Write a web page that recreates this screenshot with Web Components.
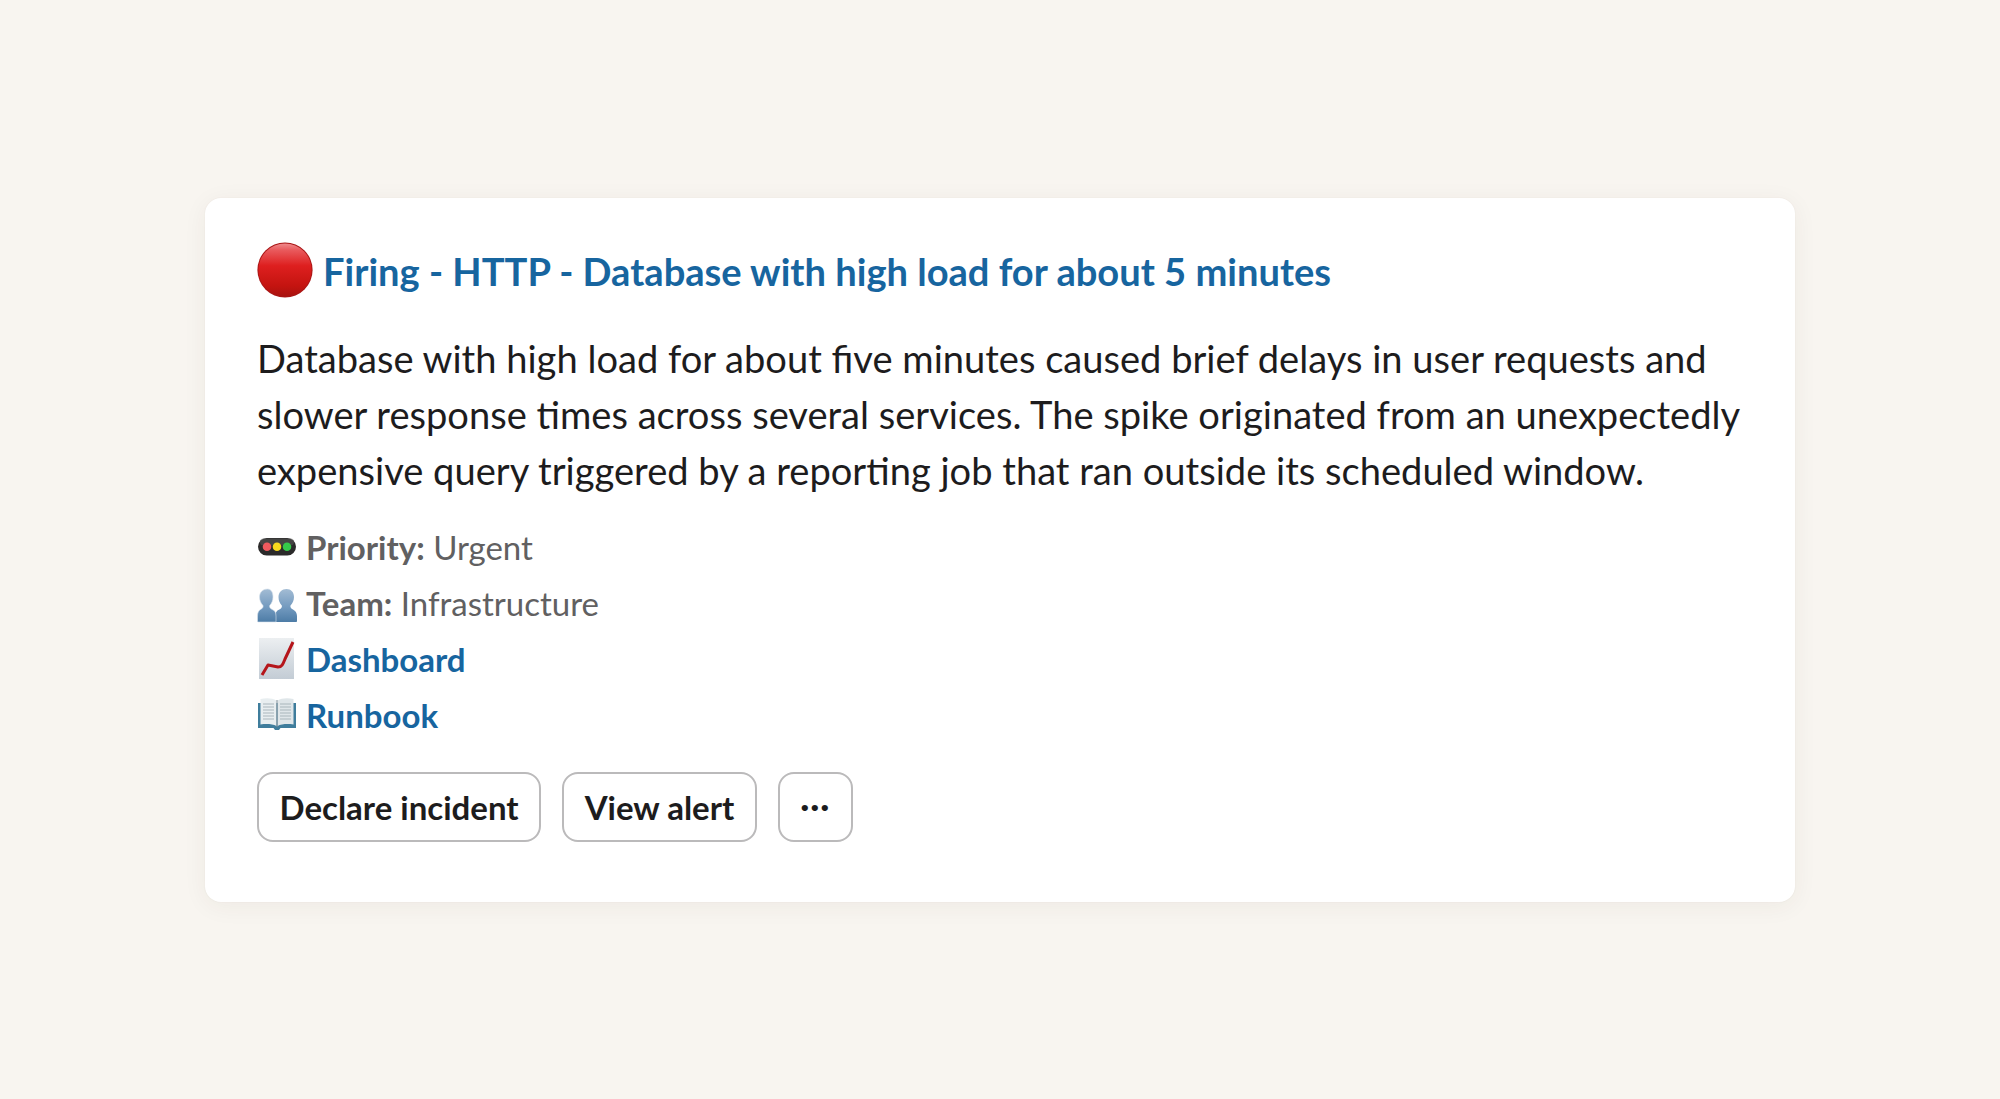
<!DOCTYPE html>
<html>
    <head>
        <title>Alert</title>
        <style>
            html, body { margin: 0; height: 100%; }
            body {
                display: flex;
                align-items: center;
                justify-content: center;
                background: #f8f5f0;
                font-family: Lato, "Liberation Sans", sans-serif;
            }
        </style>

        <!-- ---------------------------------------------------------------------------- ICON -->
        <script>
            const ICONS = {
                circle: `<svg viewBox="0 0 56 56" width="56" height="56">
                    <defs>
                        <linearGradient id="r" x1="0" y1="0" x2="0" y2="1">
                            <stop offset="0" stop-color="#ef8a8c"/>
                            <stop offset=".12" stop-color="#e95b5e"/>
                            <stop offset=".42" stop-color="#de1f1f"/>
                            <stop offset=".8" stop-color="#c41410"/>
                            <stop offset="1" stop-color="#a8120f"/>
                        </linearGradient>
                    </defs>
                    <circle cx="28" cy="28" r="27.6" fill="#a81414"/>
                    <circle cx="28" cy="28" r="26.6" fill="url(#r)"/>
                </svg>`,
                light: `<svg viewBox="0 0 40 40" width="40" height="40">
                    <rect x="1" y="11" width="38" height="17.500" rx="8.750" fill="#2b2a2a"/>
                    <rect x="3" y="11.500" width="34" height="7" rx="3.500" fill="#5a5958" opacity=".55"/>
                    <circle cx="10" cy="19.800" r="4.300" fill="#ef5a5e"/>
                    <circle cx="20" cy="19.800" r="4.300" fill="#f6d81e"/>
                    <circle cx="30" cy="19.800" r="4.300" fill="#35c94a"/>
                </svg>`,
                people: `<svg viewBox="0 0 40 40" width="40" height="40">
                    <defs>
                        <linearGradient id="p" x1="0" y1="0" x2="0" y2="1">
                            <stop offset="0" stop-color="#a3bcd4"/>
                            <stop offset=".6" stop-color="#6f97bd"/>
                            <stop offset="1" stop-color="#4d7ca6"/>
                        </linearGradient>
                    </defs>
                    <path fill="url(#p)" d="M29.500 6c-4.500 0-8 3-8 8 0 3.500 1.300 6.500 3.300 8.500.5 1.500-.5 3-2.500 4-3 1.300-3.800 3.300-3.800 6.500v6h20.500c.6 0 1-.4 1-1v-5c0-3-1.500-5.200-4-6.500-2-1-3-2.500-2.500-4 2-2 3.500-5 3.500-8.500 0-5-3-8-7.500-8z"/>
                    <path fill="url(#p)" stroke="#d9e3ec" stroke-width=".6" d="M10.500 6C6 6 2.500 9 2.500 14c0 3.500 1.500 6.500 3.500 8.500.5 1.500-.5 3-2.500 4C1.500 27.500.5 30 .5 33v5c0 .6.400 1 1 1H19v-6c0-3.200-.8-5.200-3.800-6.500-2-1-3-2.500-2.500-4 2-2 3.300-5 3.300-8.500 0-5-2-8-5.500-8z"/>
                </svg>`,
                chart: `<svg viewBox="0 -1 40 41" width="40" height="41">
                    <defs>
                        <linearGradient id="c" x1="0" y1="0" x2="0" y2="1">
                            <stop offset="0" stop-color="#eceff1"/>
                            <stop offset="1" stop-color="#c3ccd5"/>
                        </linearGradient>
                    </defs>
                    <rect x="2" y="-1" width="35" height="41" fill="url(#c)"/>
                    <path d="M5 36 L11 26 L21 28 C25 28 26 25 28 20 L36 3" fill="none" stroke="#b5161b" stroke-width="3" stroke-linejoin="round"/>
                </svg>`,
                book: `<svg viewBox="0 0 40 40" width="40" height="40">
                    <path d="M1 8h38v25H23.500l-1.500 2h-4l-1.500-2H1z" fill="#3f7d9c"/>
                    <path d="M3.500 4c6-1.500 12-1 16 1.500V31c-4-2-10-2.500-16-1.500z" fill="#e8eef0"/>
                    <path d="M36.500 4c-6-1.500-12-1-16 1.500V31c4-2 10-2.500 16-1.500z" fill="#dfe6e9"/>
                    <path d="M6 9h11M6 12h11M6 15h11M6 18h11M6 21h11M6 24h11M23 9h11M23 12h11M23 15h11M23 18h11M23 21h11M23 24h11" stroke="#a9b5bc" stroke-width="1.200"/>
                    <path d="M20 5v27" stroke="#7f8f98" stroke-width="1"/>
                </svg>`,
            };

            class EmojiIcon extends HTMLElement
            {
                constructor()
                {
                    super();
                    this.attachShadow({ mode: 'open' });
                }

                connectedCallback()
                {
                    this.shadowRoot.innerHTML = `
                        <style>
                            :host { display: inline-flex; flex: none; }
                            svg { display: block; }
                        </style>
                        ${ICONS[this.getAttribute('name')]}`;
                }
            }
            window.customElements.define('emoji-icon', EmojiIcon);
        </script>

        <!-- ---------------------------------------------------------------------------- CARD -->
        <template id="alert-card">
            <style>
                :host {
                    display: block;
                    box-sizing: border-box;
                    width: 1590px;
                    height: 704px;
                    padding: 44px 52px;
                    background: #fff;
                    border-radius: 16px;
                    box-shadow: 0 4px 24px rgba(60, 50, 30, .06), 0 0 2px rgba(60, 50, 30, .06);
                    color: #1d1c1d;
                }
                #body { margin: 32px 0 21px; font-size: 38.1px; line-height: 56px; }
                #meta { display: flex; flex-direction: column; }
                #actions { display: flex; gap: 21px; margin-top: 29px; }
            </style>
            <slot name="title"></slot>
            <div id="body"><slot name="body"></slot></div>
            <div id="meta"><slot name="meta"></slot></div>
            <div id="actions"><slot name="actions"></slot></div>
        </template>
        <script>
            class AlertCard extends HTMLElement
            {
                constructor()
                {
                    super();
                    this.attachShadow({ mode: 'open' }).appendChild(
                        document.querySelector('template#alert-card').content.cloneNode(true));
                }
            }
            window.customElements.define('alert-card', AlertCard);
        </script>

        <!-- ---------------------------------------------------------------------------- TITLE -->
        <template id="alert-title">
            <style>
                :host {
                    display: flex;
                    align-items: center;
                    gap: 10px;
                    height: 56px;
                    font-size: 38.1px;
                    font-weight: 700;
                    color: #17659f;
                }
                span { padding-top: 2px; }
            </style>
            <slot name="icon"></slot>
            <span><slot></slot></span>
        </template>
        <script>
            class AlertTitle extends HTMLElement
            {
                constructor()
                {
                    super();
                    this.attachShadow({ mode: 'open' }).appendChild(
                        document.querySelector('template#alert-title').content.cloneNode(true));
                }
            }
            window.customElements.define('alert-title', AlertTitle);
        </script>

        <!-- ---------------------------------------------------------------------------- META -->
        <template id="meta-row">
            <style>
                :host {
                    display: flex;
                    align-items: center;
                    gap: 9px;
                    height: 56px;
                    font-size: 33px;
                    color: #616061;
                }
                b { font-weight: 700; }
                a { font-weight: 700; color: #17659f; text-decoration: none; }
            </style>
            <slot name="icon"></slot>
            <span id="text"></span>
        </template>
        <script>
            class MetaRow extends HTMLElement
            {
                constructor()
                {
                    super();
                    this.attachShadow({ mode: 'open' }).appendChild(
                        document.querySelector('template#meta-row').content.cloneNode(true));
                }

                connectedCallback()
                {
                    let text = this.shadowRoot.querySelector('#text');
                    if (this.hasAttribute('link'))
                    {
                        let a = document.createElement('a');
                        a.textContent = this.getAttribute('link');
                        text.replaceChildren(a);
                    }
                    else
                    {
                        let b = document.createElement('b');
                        b.textContent = this.getAttribute('label') + ':';
                        text.replaceChildren(b, ' ' + this.getAttribute('value'));
                    }
                }
            }
            window.customElements.define('meta-row', MetaRow);
        </script>

        <!-- ---------------------------------------------------------------------------- BUTTON -->
        <template id="action-button">
            <style>
                :host { display: inline-block; }
                button {
                    box-sizing: border-box;
                    height: 70px;
                    padding: 0 20.5px;
                    background: #fff;
                    border: 2px solid #bbbabb;
                    border-radius: 16px;
                    font: 700 33px Lato, "Liberation Sans", sans-serif;
                    color: #1d1c1d;
                }
                :host([compact]) button {
                    width: 75px;
                    padding: 0 0 4px;
                    letter-spacing: 1px;
                }
            </style>
            <button><slot></slot></button>
        </template>
        <script>
            class ActionButton extends HTMLElement
            {
                constructor()
                {
                    super();
                    this.attachShadow({ mode: 'open' }).appendChild(
                        document.querySelector('template#action-button').content.cloneNode(true));
                }
            }
            window.customElements.define('action-button', ActionButton);
        </script>
    </head>
    <body>
        <alert-card>
            <alert-title slot="title"><emoji-icon slot="icon" name="circle"></emoji-icon>Firing - HTTP - Database with high load for about 5 minutes</alert-title>
            <span slot="body">Database with high load for about five minutes caused brief delays in user requests and slower response times across several services. The spike originated from an unexpectedly expensive query triggered by a reporting job that ran outside its scheduled window.</span>
            <meta-row slot="meta" label="Priority" value="Urgent"><emoji-icon slot="icon" name="light"></emoji-icon></meta-row>
            <meta-row slot="meta" label="Team" value="Infrastructure"><emoji-icon slot="icon" name="people"></emoji-icon></meta-row>
            <meta-row slot="meta" link="Dashboard"><emoji-icon slot="icon" name="chart"></emoji-icon></meta-row>
            <meta-row slot="meta" link="Runbook"><emoji-icon slot="icon" name="book"></emoji-icon></meta-row>
            <action-button slot="actions">Declare incident</action-button>
            <action-button slot="actions">View alert</action-button>
            <action-button slot="actions" compact>···</action-button>
        </alert-card>
    </body>
</html>
